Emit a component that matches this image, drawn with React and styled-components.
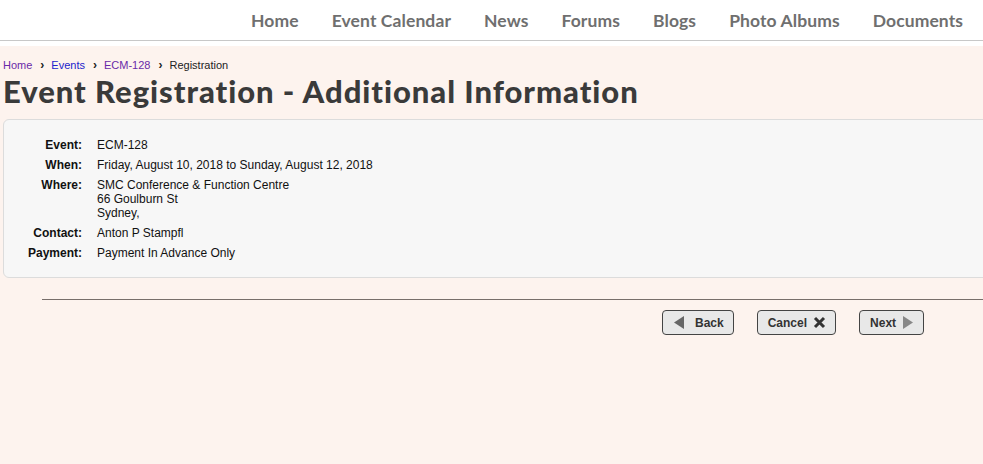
import React from "react";
import styled, { createGlobalStyle } from "styled-components";

const GlobalStyle = createGlobalStyle`
  html, body {
    margin: 0;
    padding: 0;
    background: #fdf3ee;
    overflow: hidden;
  }
  body {
    font-family: "Liberation Sans", Arial, sans-serif;
  }
`;

const navItems = [
  "Home",
  "Event Calendar",
  "News",
  "Forums",
  "Blogs",
  "Photo Albums",
  "Documents",
];

const details = [
  { label: "Event:", value: ["ECM-128"] },
  { label: "When:", value: ["Friday, August 10, 2018 to Sunday, August 12, 2018"] },
  {
    label: "Where:",
    value: ["SMC Conference & Function Centre", "66 Goulburn St", "Sydney,"],
  },
  { label: "Contact:", value: ["Anton P Stampfl"] },
  { label: "Payment:", value: ["Payment In Advance Only"] },
];

const App = () => {
  return (
    <Page>
      <GlobalStyle />
      <Header>
        <Nav>
          {navItems.map((item) => (
            <NavLink key={item} href="#">
              {item}
            </NavLink>
          ))}
        </Nav>
      </Header>
      <Main>
        <Breadcrumb>
          <Crumb href="#" $visited>
            Home
          </Crumb>
          <Sep>›</Sep>
          <Crumb href="#">Events</Crumb>
          <Sep>›</Sep>
          <Crumb href="#" $visited>
            ECM-128
          </Crumb>
          <Sep>›</Sep>
          <Current>Registration</Current>
        </Breadcrumb>
        <Title>Event Registration - Additional Information</Title>
        <Panel>
          <DetailGrid>
            {details.map((d) => (
              <React.Fragment key={d.label}>
                <Label>{d.label}</Label>
                <Value>
                  {d.value.map((line) => (
                    <div key={line}>{line}</div>
                  ))}
                </Value>
              </React.Fragment>
            ))}
          </DetailGrid>
        </Panel>
        <Divider />
        <Actions>
          <Button $gap="10px">
            <svg width="12" height="15" viewBox="0 0 12 15">
              <polygon points="11,1 11,14 1,7.5" fill="#666" />
            </svg>
            Back
          </Button>
          <Button>
            Cancel
            <svg width="13" height="13" viewBox="0 0 13 13">
              <path
                d="M2 2 L11 11 M11 2 L2 11"
                stroke="#333"
                strokeWidth="3"
                strokeLinecap="butt"
              />
            </svg>
          </Button>
          <Button>
            Next
            <svg width="12" height="15" viewBox="0 0 12 15">
              <polygon points="1,1 1,14 11,7.5" fill="#888" />
            </svg>
          </Button>
        </Actions>
      </Main>
    </Page>
  );
};

const Page = styled.div`
  width: 1000px;
  min-height: 464px;
`;

const Header = styled.header`
  background: #fff;
  border-bottom: 1px solid #c8c8c8;
  height: 40px;
  margin-bottom: 5px;
  box-shadow: 0 5px 0 #fff;
`;

const Nav = styled.nav`
  display: flex;
  gap: 33px;
  padding-left: 251px;
  height: 40px;
  align-items: center;
`;

const NavLink = styled.a`
  font-family: "Lato", sans-serif;
  font-weight: 700;
  font-size: 17.5px;
  color: #6f6f6f;
  text-decoration: none;
  letter-spacing: 0.1px;
`;

const Main = styled.main`
  padding: 12px 0 0 3px;
`;

const Breadcrumb = styled.div`
  display: flex;
  align-items: center;
  font-size: 11px;
  height: 14px;
`;

const Crumb = styled.a`
  color: ${(p) => (p.$visited ? "#6a2aa8" : "#2222cc")};
  text-decoration: none;
`;

const Sep = styled.span`
  font-weight: 700;
  font-size: 12px;
  color: #222;
  margin: 0 7px 0 8px;
`;

const Current = styled.span`
  color: #222;
`;

const Title = styled.h1`
  font-family: "Lato", sans-serif;
  font-weight: 900;
  font-size: 31px;
  color: #3a3a3a;
  margin: 1px 0 10px 0;
  letter-spacing: 0.95px;
  line-height: 36px;
`;

const Panel = styled.section`
  background: #f7f7f7;
  border: 1px solid #dcdcdc;
  border-radius: 6px;
  padding: 18px 0 17px 0;
`;

const DetailGrid = styled.div`
  display: grid;
  grid-template-columns: 78px auto;
  column-gap: 15px;
  row-gap: 6px;
  font-size: 12px;
  line-height: 14px;
  color: #111;
`;

const Label = styled.div`
  font-weight: 700;
  text-align: right;
`;

const Value = styled.div``;

const Divider = styled.hr`
  border: none;
  border-top: 1px solid #776e6a;
  margin: 21px 0 0 39px;
`;

const Actions = styled.div`
  display: flex;
  gap: 23px;
  padding-left: 659px;
  margin-top: 10px;
`;

const Button = styled.button`
  display: flex;
  align-items: center;
  gap: ${(p) => p.$gap || "6px"};
  height: 25px;
  padding: 0 9px 0 10px;
  background: #e8e8e8;
  border: 1px solid #444;
  border-radius: 4px;
  font-family: "Liberation Sans", Arial, sans-serif;
  font-weight: 700;
  font-size: 12px;
  color: #333;
`;

export default App;
